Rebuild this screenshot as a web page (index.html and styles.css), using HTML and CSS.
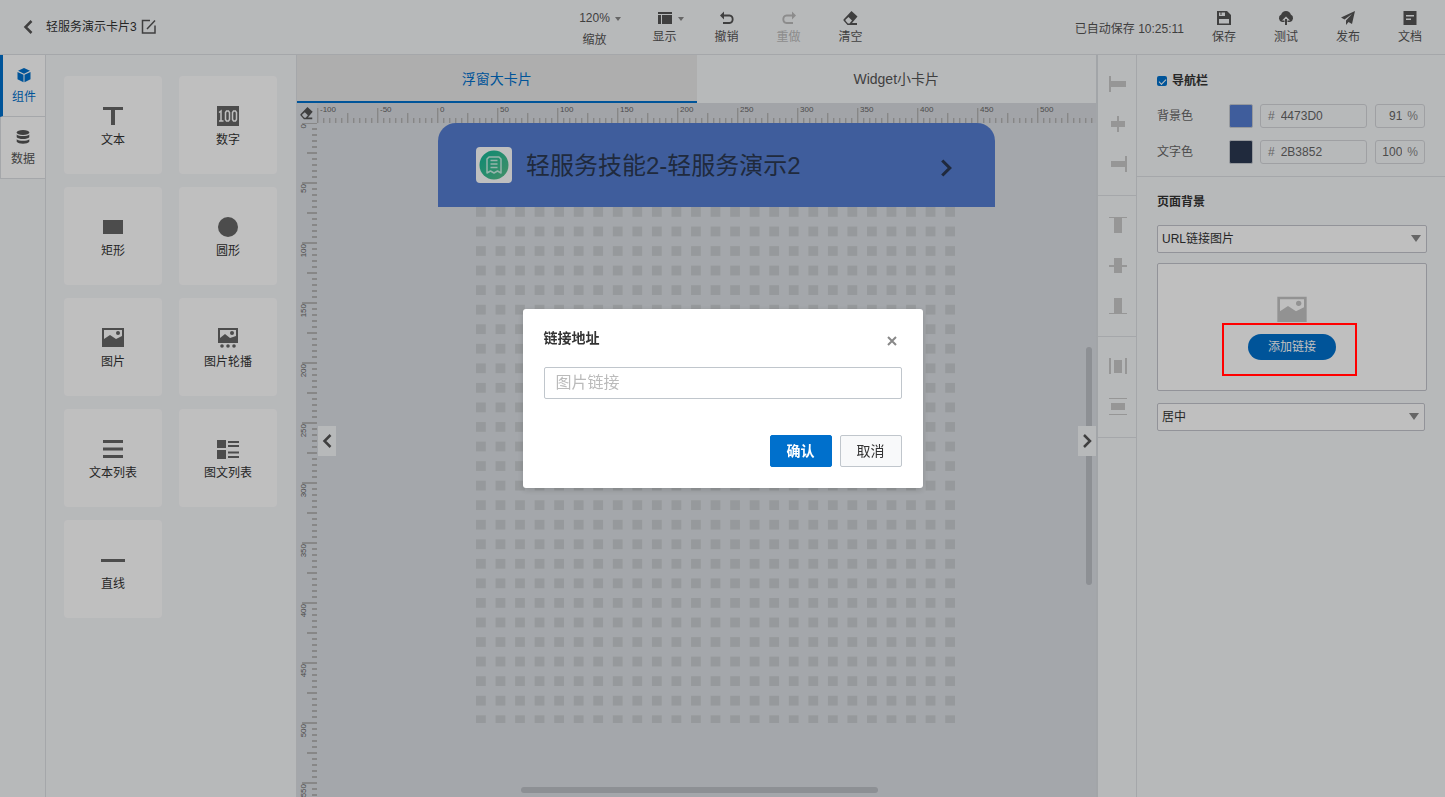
FILE: index.html
```html
<!DOCTYPE html>
<html lang="zh-CN">
<head>
<meta charset="utf-8">
<title>轻服务演示卡片3</title>
<link rel="stylesheet" href="styles.css">
</head>
<body>
<svg class="defs" aria-hidden="true">
  <defs>
    <symbol id="i-picture" viewBox="0 0 24 24"><path fill-rule="evenodd" d="M1 2h22v19H1zM3 4v9l6-4 6 4 6-3V4z"/><circle cx="17" cy="7" r="2"/></symbol>
    <symbol id="i-eraser" viewBox="0 0 16 16"><path fill-rule="evenodd" d="M8.500 1 14.500 6.500 9 13h5v2H4.500L.5 10.500v-1zM5.500 7 2.500 9.800v1L5 13.500h1.500l2.500-3z"/></symbol>
    <symbol id="i-left" viewBox="0 0 16 16"><path d="M11.500 2 5.500 8l6 6" fill="none" stroke="currentColor" stroke-width="2.500"/></symbol>
    <symbol id="i-right" viewBox="0 0 16 16"><path d="m5 2 6 6-6 6" fill="none" stroke="currentColor" stroke-width="2.500"/></symbol>
  </defs>
</svg>

<header class="header">
  <div class="header-left">
    <button class="icon-btn" aria-label="返回"><svg class="i16"><use href="#i-left"/></svg></button>
    <span class="doc-name">轻服务演示卡片3</span>
    <button class="icon-btn" aria-label="重命名"><svg class="i16" viewBox="0 0 16 16"><path d="M9 1.500H1.500v12.500h12.500V6.500M6 10l8-8.500" fill="none" stroke="currentColor" stroke-width="1.500"/></svg></button>
  </div>
  <div class="tools">
    <button class="tool tool-zoom"><span class="tool-top">120%<i class="caret"></i></span><span>缩放</span></button>
    <button class="tool"><span class="tool-top"><svg class="i16" viewBox="0 0 16 16"><path d="M1 2h14v2H1zM1 5h3v9H1zM5 5h10v9H5z"/></svg><i class="caret"></i></span><span>显示</span></button>
    <button class="tool"><span class="tool-top"><svg class="i16" viewBox="0 0 16 16"><path d="M5 1.500v3h5.500c5.500 0 5.500 9.500 0 9.500H4v-2h6.500c3 0 3-5.500 0-5.500H5v3l-4-4z"/></svg></span><span>撤销</span></button>
    <button class="tool disabled" disabled><span class="tool-top"><svg class="i16" viewBox="0 0 16 16"><path d="M11 1.500v3H5.500C0 4.500 0 14 5.500 14H12v-2H5.500c-3 0-3-5.500 0-5.500H11v3l4-4z"/></svg></span><span>重做</span></button>
    <button class="tool"><span class="tool-top"><svg class="i16"><use href="#i-eraser"/></svg></span><span>清空</span></button>
  </div>
  <div class="header-right">
    <span class="saved">已自动保存 10:25:11</span>
    <button class="tool"><span class="tool-top"><svg class="i16" viewBox="0 0 16 16"><path fill-rule="evenodd" d="M1 1h10l4 4v10H1zM3 2.500V6h6V2.500H5.500V5H4.500V2.500zM3 9v4.500h10V9z"/></svg></span><span>保存</span></button>
    <button class="tool"><span class="tool-top"><svg class="i16" viewBox="0 0 16 16"><path d="M4 12a4 4 0 0 1-.8-7.500 5 5 0 0 1 9.600 0A4 4 0 0 1 12 12H9.500V10.500H12L8 6.500l-4 4h2.500V12z"/><path d="M7 9h2v6H7z"/></svg></span><span>测试</span></button>
    <button class="tool"><span class="tool-top"><svg class="i16" viewBox="0 0 16 16"><path d="M15 1 1 7.500 4.500 9.500 12 4 6 10.500V15l2.500-3 3.500 2z"/></svg></span><span>发布</span></button>
    <button class="tool"><span class="tool-top"><svg class="i16" viewBox="0 0 16 16"><path fill-rule="evenodd" d="M1.500 1h13v14h-13zM4 5v1.500h8V5zM4 8.500V10h5V8.500z"/></svg></span><span>文档</span></button>
  </div>
</header>

<main class="workspace">
  <nav class="side-tabs">
    <button class="side-tab active"><svg class="i16" viewBox="0 0 16 16"><path d="m8 1 6 2.800L8 6.800 2 3.800zM1.500 5l6 2.800v7.400l-6-3zM14.500 5l-6 2.800v7.400l6-3z"/></svg><span>组件</span></button>
    <button class="side-tab"><svg class="i16" viewBox="0 0 16 16"><ellipse cx="8" cy="3.500" rx="6.300" ry="2.500"/><path d="M1.700 5.500c2 2 10.600 2 12.600 0v2.700c-1.500 2.400-11.100 2.400-12.600 0zM1.700 10.200c2 2 10.600 2 12.600 0v2.500c-1.500 2.600-11.100 2.600-12.600 0z"/></svg><span>数据</span></button>
  </nav>

  <section class="components" aria-label="组件">
    <button class="comp"><svg class="i24" viewBox="0 0 24 24"><path d="M2 3h20v3H14v15h-4V6H2z"/></svg><span>文本</span></button>
    <button class="comp"><svg class="i24" viewBox="0 0 24 24"><path d="M1 2h22v20H1z"/><path d="M3 8.500 5 7v10M3 17h4.500M10.500 7h2l1 1.500v7l-1 1.500h-2l-1-1.500v-7zM17.500 7h2l1 1.500v7l-1 1.500h-2l-1-1.500v-7z" fill="none" stroke="#fff" stroke-width="1.500"/></svg><span>数字</span></button>
    <button class="comp"><svg class="i24" viewBox="0 0 24 24"><path d="M2 5h20v14H2z"/></svg><span>矩形</span></button>
    <button class="comp"><svg class="i24" viewBox="0 0 24 24"><circle cx="12" cy="12" r="10"/></svg><span>圆形</span></button>
    <button class="comp"><svg class="i24"><use href="#i-picture"/></svg><span>图片</span></button>
    <button class="comp"><svg class="i24" viewBox="0 0 24 24"><path fill-rule="evenodd" d="M2 2h20v15H2zM4 4v8l5-4 5 4 6-2V4z"/><circle cx="16" cy="7" r="2"/><circle cx="6" cy="20" r="1.800"/><circle cx="12" cy="20" r="1.800"/><circle cx="18" cy="20" r="1.800"/></svg><span>图片轮播</span></button>
    <button class="comp"><svg class="i24" viewBox="0 0 24 24"><path d="M2 3h20v3H2zM2 10.500h20v3H2zM2 18h20v3H2z"/></svg><span>文本列表</span></button>
    <button class="comp"><svg class="i24" viewBox="0 0 24 24"><path d="M1 3h9v8H1zM1 13h9v9H1zM12 4h11v2H12zM12 8h11v2H12zM12 14.500h11v2H12zM12 19h11v2H12z"/></svg><span>图文列表</span></button>
    <button class="comp"><svg class="i24" viewBox="0 0 24 24"><path d="M0 11h24v3H0z"/></svg><span>直线</span></button>
  </section>

  <section class="editor">
    <div class="tabs">
      <button class="tab active">浮窗大卡片</button>
      <button class="tab">Widget小卡片</button>
    </div>
    <div class="board">
      <button class="corner" aria-label="清空"><svg class="i14"><use href="#i-eraser"/></svg></button>
      <svg class="ruler ruler-x">
        <defs><pattern id="px" width="60" height="20" patternUnits="userSpaceOnUse"><path d="M0 5h1v15H0zM30 10h1v10h-1zM6 15h1v5H6zM12 15h1v5h-1zM18 15h1v5h-1zM24 15h1v5h-1zM36 15h1v5h-1zM42 15h1v5h-1zM48 15h1v5h-1zM54 15h1v5h-1z"/><path opacity=".4" d="M1 5h1v15H1zM31 10h1v10h-1zM7 15h1v5H7zM13 15h1v5h-1zM19 15h1v5h-1zM25 15h1v5h-1zM37 15h1v5h-1zM43 15h1v5h-1zM49 15h1v5h-1zM55 15h1v5h-1z"/></pattern></defs>
        <rect width="100%" height="20" fill="url(#px)"/>
        <text x="3" y="9">-100</text><text x="63" y="9">-50</text><text x="123" y="9">0</text><text x="183" y="9">50</text><text x="243" y="9">100</text><text x="303" y="9">150</text><text x="363" y="9">200</text><text x="423" y="9">250</text><text x="483" y="9">300</text><text x="543" y="9">350</text><text x="603" y="9">400</text><text x="663" y="9">450</text><text x="723" y="9">500</text>
      </svg>
      <svg class="ruler ruler-y">
        <defs><pattern id="py" y="-1" width="20" height="60" patternUnits="userSpaceOnUse"><path d="M5 0v2h15V0zM10 30v2h10v-2zM15 6v2h5V6zM15 12v2h5v-2zM15 18v2h5v-2zM15 24v2h5v-2zM15 36v2h5v-2zM15 42v2h5v-2zM15 48v2h5v-2zM15 54v2h5v-2z"/></pattern></defs>
        <rect width="20" height="100%" fill="url(#py)"/>
        <g transform="rotate(-90)" text-anchor="end"><text x="-1" y="9">0</text><text x="-61" y="9">50</text><text x="-121" y="9">100</text><text x="-181" y="9">150</text><text x="-241" y="9">200</text><text x="-301" y="9">250</text><text x="-361" y="9">300</text><text x="-421" y="9">350</text><text x="-481" y="9">400</text><text x="-541" y="9">450</text><text x="-601" y="9">500</text><text x="-661" y="9">550</text></g>
      </svg>
      <div class="stage">
        <article class="card">
          <div class="card-nav">
            <svg class="card-logo" viewBox="0 0 36 36">
              <defs><linearGradient id="lg" x1="0" y1="0" x2="1" y2="1"><stop offset="0" stop-color="#10b89a"/><stop offset="1" stop-color="#5cc08a"/></linearGradient></defs>
              <rect width="36" height="36" rx="4" fill="#fff"/><circle cx="18" cy="18" r="14.500" fill="url(#lg)"/>
              <path d="M13 10h10l2 2v14l-3.500-2-3.500 2-3.500-2-3.500 2V12zM14.500 13.500h7M14.500 17h7M14.500 20.500h7" fill="none" stroke="#c8f0e4" stroke-width="1.500" stroke-linejoin="round"/>
            </svg>
            <span class="card-title">轻服务技能2-轻服务演示2</span>
            <svg class="card-more"><use href="#i-right"/></svg>
          </div>
          <svg class="card-grid" viewBox="0 0 490 528">
            <defs><pattern id="dots" width="20" height="20" patternUnits="userSpaceOnUse"><rect width="10" height="10" fill="#c9cdd0"/></pattern></defs>
            <rect width="490" height="528" fill="url(#dots)"/>
          </svg>
        </article>
        <div class="bar bar-y"></div>
        <div class="bar bar-x"></div>
        <button class="handle handle-left" aria-label="收起左侧"><svg class="i16"><use href="#i-left"/></svg></button>
        <button class="handle handle-right" aria-label="收起右侧"><svg class="i16"><use href="#i-right"/></svg></button>
      </div>
    </div>
  </section>

  <aside class="align-rail">
    <div class="align-group">
      <button class="align" aria-label="左对齐"><svg class="i18" viewBox="0 0 18 18"><path d="M0 1h2v16H0zM2 6h15v6H2z"/></svg></button>
      <button class="align" aria-label="水平居中"><svg class="i18" viewBox="0 0 18 18"><path d="M8 1h2v16H8zM2 6h14v6H2z"/></svg></button>
      <button class="align" aria-label="右对齐"><svg class="i18" viewBox="0 0 18 18"><path d="M16 1h2v16h-2zM2 6h14v6H2z"/></svg></button>
    </div>
    <div class="align-group">
      <button class="align" aria-label="顶对齐"><svg class="i18" viewBox="0 0 18 18"><path d="M0 1h18v1H0zM5 2h8v15H5z"/></svg></button>
      <button class="align" aria-label="垂直居中"><svg class="i18" viewBox="0 0 18 18"><path d="M0 9h18v2H0zM5 2h8v15H5z"/></svg></button>
      <button class="align" aria-label="底对齐"><svg class="i18" viewBox="0 0 18 18"><path d="M0 17h18v1H0zM5 2h8v15H5z"/></svg></button>
    </div>
    <div class="align-group">
      <button class="align" aria-label="水平分布"><svg class="i18" viewBox="0 0 18 18"><path d="M0 1h2v16H0zM16 1h2v16h-2zM5 3h8v13H5z"/></svg></button>
      <button class="align" aria-label="垂直分布"><svg class="i18" viewBox="0 0 18 18"><path d="M0 1h18v1H0zM0 17h18v1H0zM2 6h14v7H2z"/></svg></button>
    </div>
  </aside>

  <aside class="props">
    <section class="props-nav">
      <label class="check"><input type="checkbox" checked>导航栏</label>
      <div class="row">
        <label for="bg">背景色</label><span class="swatch swatch-bg"></span>
        <span class="field field-hex"><i>#</i><input id="bg" value="4473D0"></span>
        <span class="field field-pct"><input aria-label="背景色不透明度" value="91"><i>%</i></span>
      </div>
      <div class="row">
        <label for="fg">文字色</label><span class="swatch swatch-fg"></span>
        <span class="field field-hex"><i>#</i><input id="fg" value="2B3852"></span>
        <span class="field field-pct"><input aria-label="文字色不透明度" value="100"><i>%</i></span>
      </div>
    </section>
    <section class="props-page">
      <h2 class="props-title">页面背景</h2>
      <div class="select"><select aria-label="背景类型"><option>URL链接图片</option></select></div>
      <div class="upload">
        <svg class="i32"><use href="#i-picture"/></svg>
        <div class="upload-action"><button class="pill">添加链接</button></div>
      </div>
      <div class="select select-pos"><select aria-label="背景位置"><option>居中</option></select></div>
    </section>
  </aside>
</main>

<div class="overlay">
  <div class="dialog" role="dialog" aria-labelledby="dlg-title">
    <div class="dialog-head">
      <h2 id="dlg-title" class="dialog-title">链接地址</h2>
      <button class="icon-btn dialog-close" aria-label="关闭"><svg class="i14" viewBox="0 0 14 14"><path d="m3 3 8 8M11 3l-8 8" stroke="currentColor" stroke-width="2"/></svg></button>
    </div>
    <input class="dialog-input" aria-label="图片链接" placeholder="图片链接">
    <div class="dialog-foot">
      <button class="btn btn-primary">确认</button>
      <button class="btn">取消</button>
    </div>
  </div>
</div>
</body>
</html>
```
FILE: styles.css
```css
* { box-sizing: border-box; }
html, body { height: 100%; }
body {
  margin: 0;
  display: flex;
  flex-direction: column;
  overflow: hidden;
  background: #f5f7f9;
  color: #333;
  font: 12px/16px "Liberation Sans", "Noto Sans CJK SC", sans-serif;
}
button, input, select { font: inherit; color: inherit; }
button { background: none; border: 0; padding: 0; }
i { font-style: normal; }
h2 { margin: 0; }
svg { display: block; fill: currentColor; flex: none; }
.defs { position: absolute; width: 0; height: 0; }
.i14 { width: 14px; height: 14px; }
.i16 { width: 16px; height: 16px; }
.i18 { width: 18px; height: 18px; }
.i24 { width: 24px; height: 24px; }
.i32 { width: 32px; height: 32px; }

.header {
  flex: none;
  height: 55px;
  display: grid;
  grid-template-columns: 1fr auto 1fr;
  border-bottom: 1px solid #dcdfe3;
  color: #555;
}
.header-left { display: flex; align-items: center; padding-left: 20px; }
.icon-btn { color: #555; }
.doc-name { margin: 0 4px 0 10px; color: #333; }
.tools, .header-right { display: flex; }
.header-right { justify-content: flex-end; padding-right: 4px; }
.saved { padding-top: 21px; margin-right: 9px; }
.tool {
  width: 62px;
  padding-top: 10px;
  display: flex;
  flex-direction: column;
  align-items: center;
  gap: 3px;
}
.tool-zoom { margin-right: 8px; gap: 6px; }
.tool-top { position: relative; height: 16px; }
.caret {
  position: absolute;
  left: 100%;
  top: 7px;
  margin-left: 5px;
  border: 3px solid transparent;
  border-top: 4px solid #888;
  border-bottom: 0;
}
.disabled { color: #bbb; }

.workspace { flex: 1; min-height: 0; display: flex; }
.side-tabs { width: 46px; border-right: 1px solid #dcdfe3; }
.side-tab {
  width: 100%;
  height: 62px;
  display: flex;
  flex-direction: column;
  align-items: center;
  justify-content: center;
  gap: 6px;
  background: #fff;
  border-bottom: 1px solid #dcdfe3;
  border-left: 1px solid #dcdfe3;
  color: #555;
}
.side-tab.active { border-left: 3px solid #0070cc; color: #0070cc; }

.components {
  width: 251px;
  padding: 21px 18px;
  display: grid;
  grid-template-columns: repeat(2, 98px);
  grid-auto-rows: 98px;
  align-content: start;
  gap: 13px 17px;
  border-right: 1px solid #dcdfe3;
}
.comp {
  padding-top: 28px;
  display: flex;
  flex-direction: column;
  align-items: center;
  gap: 4px;
  background: #fff;
  border-radius: 4px;
}
.comp svg { color: #666; }

.editor { flex: 1; min-width: 0; display: flex; flex-direction: column; border-right: 2px solid #d9dce1; }
.tabs { flex: none; height: 48px; display: grid; grid-template-columns: 1fr 1fr; }
.tab { font-size: 14px; color: #555; }
.tab.active { padding-top: 2px; background: #e9e9e9; border-bottom: 2px solid #0070cc; color: #0070cc; }
.board {
  flex: 1;
  min-height: 0;
  display: grid;
  grid-template: 20px 1fr / 20px 1fr;
  background: #dbdfe4;
}
.corner { display: grid; place-items: center; color: #555; }
.ruler { background: #d9dbe0; color: #b5b5b5; }
.ruler-x { width: 100%; height: 20px; }
.ruler-y { width: 20px; height: 100%; background: none; }
.ruler text { font-size: 8px; fill: #666; }
.stage { position: relative; overflow: hidden; }
.card { width: 557px; margin-left: 121px; }
.card-nav {
  height: 84px;
  padding: 0 39px 0 38px;
  display: flex;
  align-items: center;
  background: #547dd1;
  border-radius: 18px 18px 0 0;
  color: #2b3852;
}
.card-logo { width: 36px; height: 36px; }
.card-title { flex: 1; margin-left: 14px; padding-top: 2px; font-size: 24px; line-height: 36px; }
.card-more { width: 20px; height: 20px; margin-top: 6px; }
.card-grid { width: 479px; margin-left: 38px; }
.bar { position: absolute; border-radius: 3px; background: #bcc0c6; }
.bar-y { right: 4px; top: 224px; width: 6px; height: 238px; }
.bar-x { left: 204px; bottom: 4px; width: 357px; height: 6px; }
.handle {
  position: absolute;
  top: 303px;
  width: 18px;
  height: 30px;
  display: grid;
  place-items: center;
  background: #f5f7f9;
  color: #555;
}
.handle-left { left: 1px; }
.handle-right { right: 0; }

.align-rail { width: 38px; color: #c8c8c8; }
.align-group { padding: 9px 0 11px; border-bottom: 1px solid #dcdfe3; }
.align { width: 100%; height: 40px; padding-left: 2px; display: grid; place-items: center; }

.props { width: 309px; border-left: 1px solid #dcdfe3; }
.props-nav { padding: 18px 20px 12px; border-bottom: 1px solid #dcdfe3; }
.check { display: flex; align-items: center; gap: 5px; font-weight: bold; }
.check input {
  appearance: none;
  width: 10px;
  height: 10px;
  margin: 0;
  display: grid;
  place-items: center;
  border-radius: 2px;
  background: #0070cc;
}
.check input::after {
  content: "";
  width: 6px;
  height: 3px;
  border: solid #fff;
  border-width: 0 0 1px 1px;
  transform: rotate(-45deg);
}
.row { display: flex; align-items: center; margin-top: 12px; color: #666; }
.check + .row { margin-top: 15px; }
.row label { width: 72px; }
.swatch { width: 24px; height: 24px; border: 1px solid #c8ccd2; border-radius: 2px; }
.swatch-bg { background: #547dd1; }
.swatch-fg { background: #2b3852; }
.field {
  height: 24px;
  display: flex;
  align-items: center;
  padding: 0 7px;
  border: 1px solid #d4d6da;
  border-radius: 3px;
}
.field i { color: #888; }
.field input { min-width: 0; width: 100%; border: 0; padding: 0; background: none; outline: 0; }
.field-hex { width: 107px; margin: 0 8px 0 7px; gap: 6px; }
.field-pct { width: 50px; padding: 0 6px 0 4px; gap: 5px; }
.field-pct input { text-align: right; }

.props-page { padding: 17px 18px 0 20px; }
.props-title { font-size: 12px; line-height: 16px; margin-bottom: 15px; }
.select { position: relative; }
.select select {
  appearance: none;
  width: 100%;
  height: 28px;
  padding: 0 4px;
  display: block;
  border: 1px solid #c3c5cc;
  border-radius: 2px;
  background: #fff;
}
.select::after {
  content: "";
  position: absolute;
  right: 6px;
  top: 10px;
  border: 5px solid transparent;
  border-top: 7px solid #888;
  border-bottom: 0;
  pointer-events: none;
}
.select-pos { margin-right: 2px; }
.upload {
  height: 128px;
  margin: 10px 0 12px;
  padding-top: 30px;
  display: flex;
  flex-direction: column;
  align-items: center;
  border: 1px solid #c3c5cc;
  border-radius: 2px;
  background: #fff;
  color: #c3c3c3;
}
.upload-action { position: relative; margin-top: 8px; }
.upload-action::after {
  content: "";
  position: absolute;
  z-index: 20;
  inset: -11px -21px -16px -26px;
  border: 2px solid #f00;
  pointer-events: none;
}
.pill { display: block; width: 88px; height: 26px; border-radius: 13px; background: #0070cc; color: #fff; }

.overlay {
  position: fixed;
  z-index: 10;
  inset: 0;
  display: grid;
  place-items: center;
  background: rgba(0, 0, 0, .25);
}
.dialog {
  width: 400px;
  padding: 19px 21px 21px;
  background: #fff;
  border-radius: 3px;
  box-shadow: 0 2px 6px rgba(0, 0, 0, .15);
}
.dialog-head { display: flex; justify-content: space-between; align-items: center; }
.dialog-title { font-size: 14px; line-height: 20px; }
.dialog-close { margin: 6px 3px 0 0; color: #888; }
.dialog-input {
  display: block;
  width: 100%;
  height: 32px;
  margin-top: 19px;
  padding: 0 11px;
  border: 1px solid #c0c6cc;
  border-radius: 2px;
  font-size: 16px;
}
.dialog-input::placeholder { color: #bbb; }
.dialog-foot { display: flex; justify-content: flex-end; gap: 8px; margin-top: 36px; }
.btn {
  width: 62px;
  height: 32px;
  border: 1px solid #c0c6cc;
  border-radius: 2px;
  background: #f8f9fa;
  font-size: 14px;
}
.btn-primary { border-color: #0070cc; background: #0070cc; color: #fff; font-weight: bold; }
```
